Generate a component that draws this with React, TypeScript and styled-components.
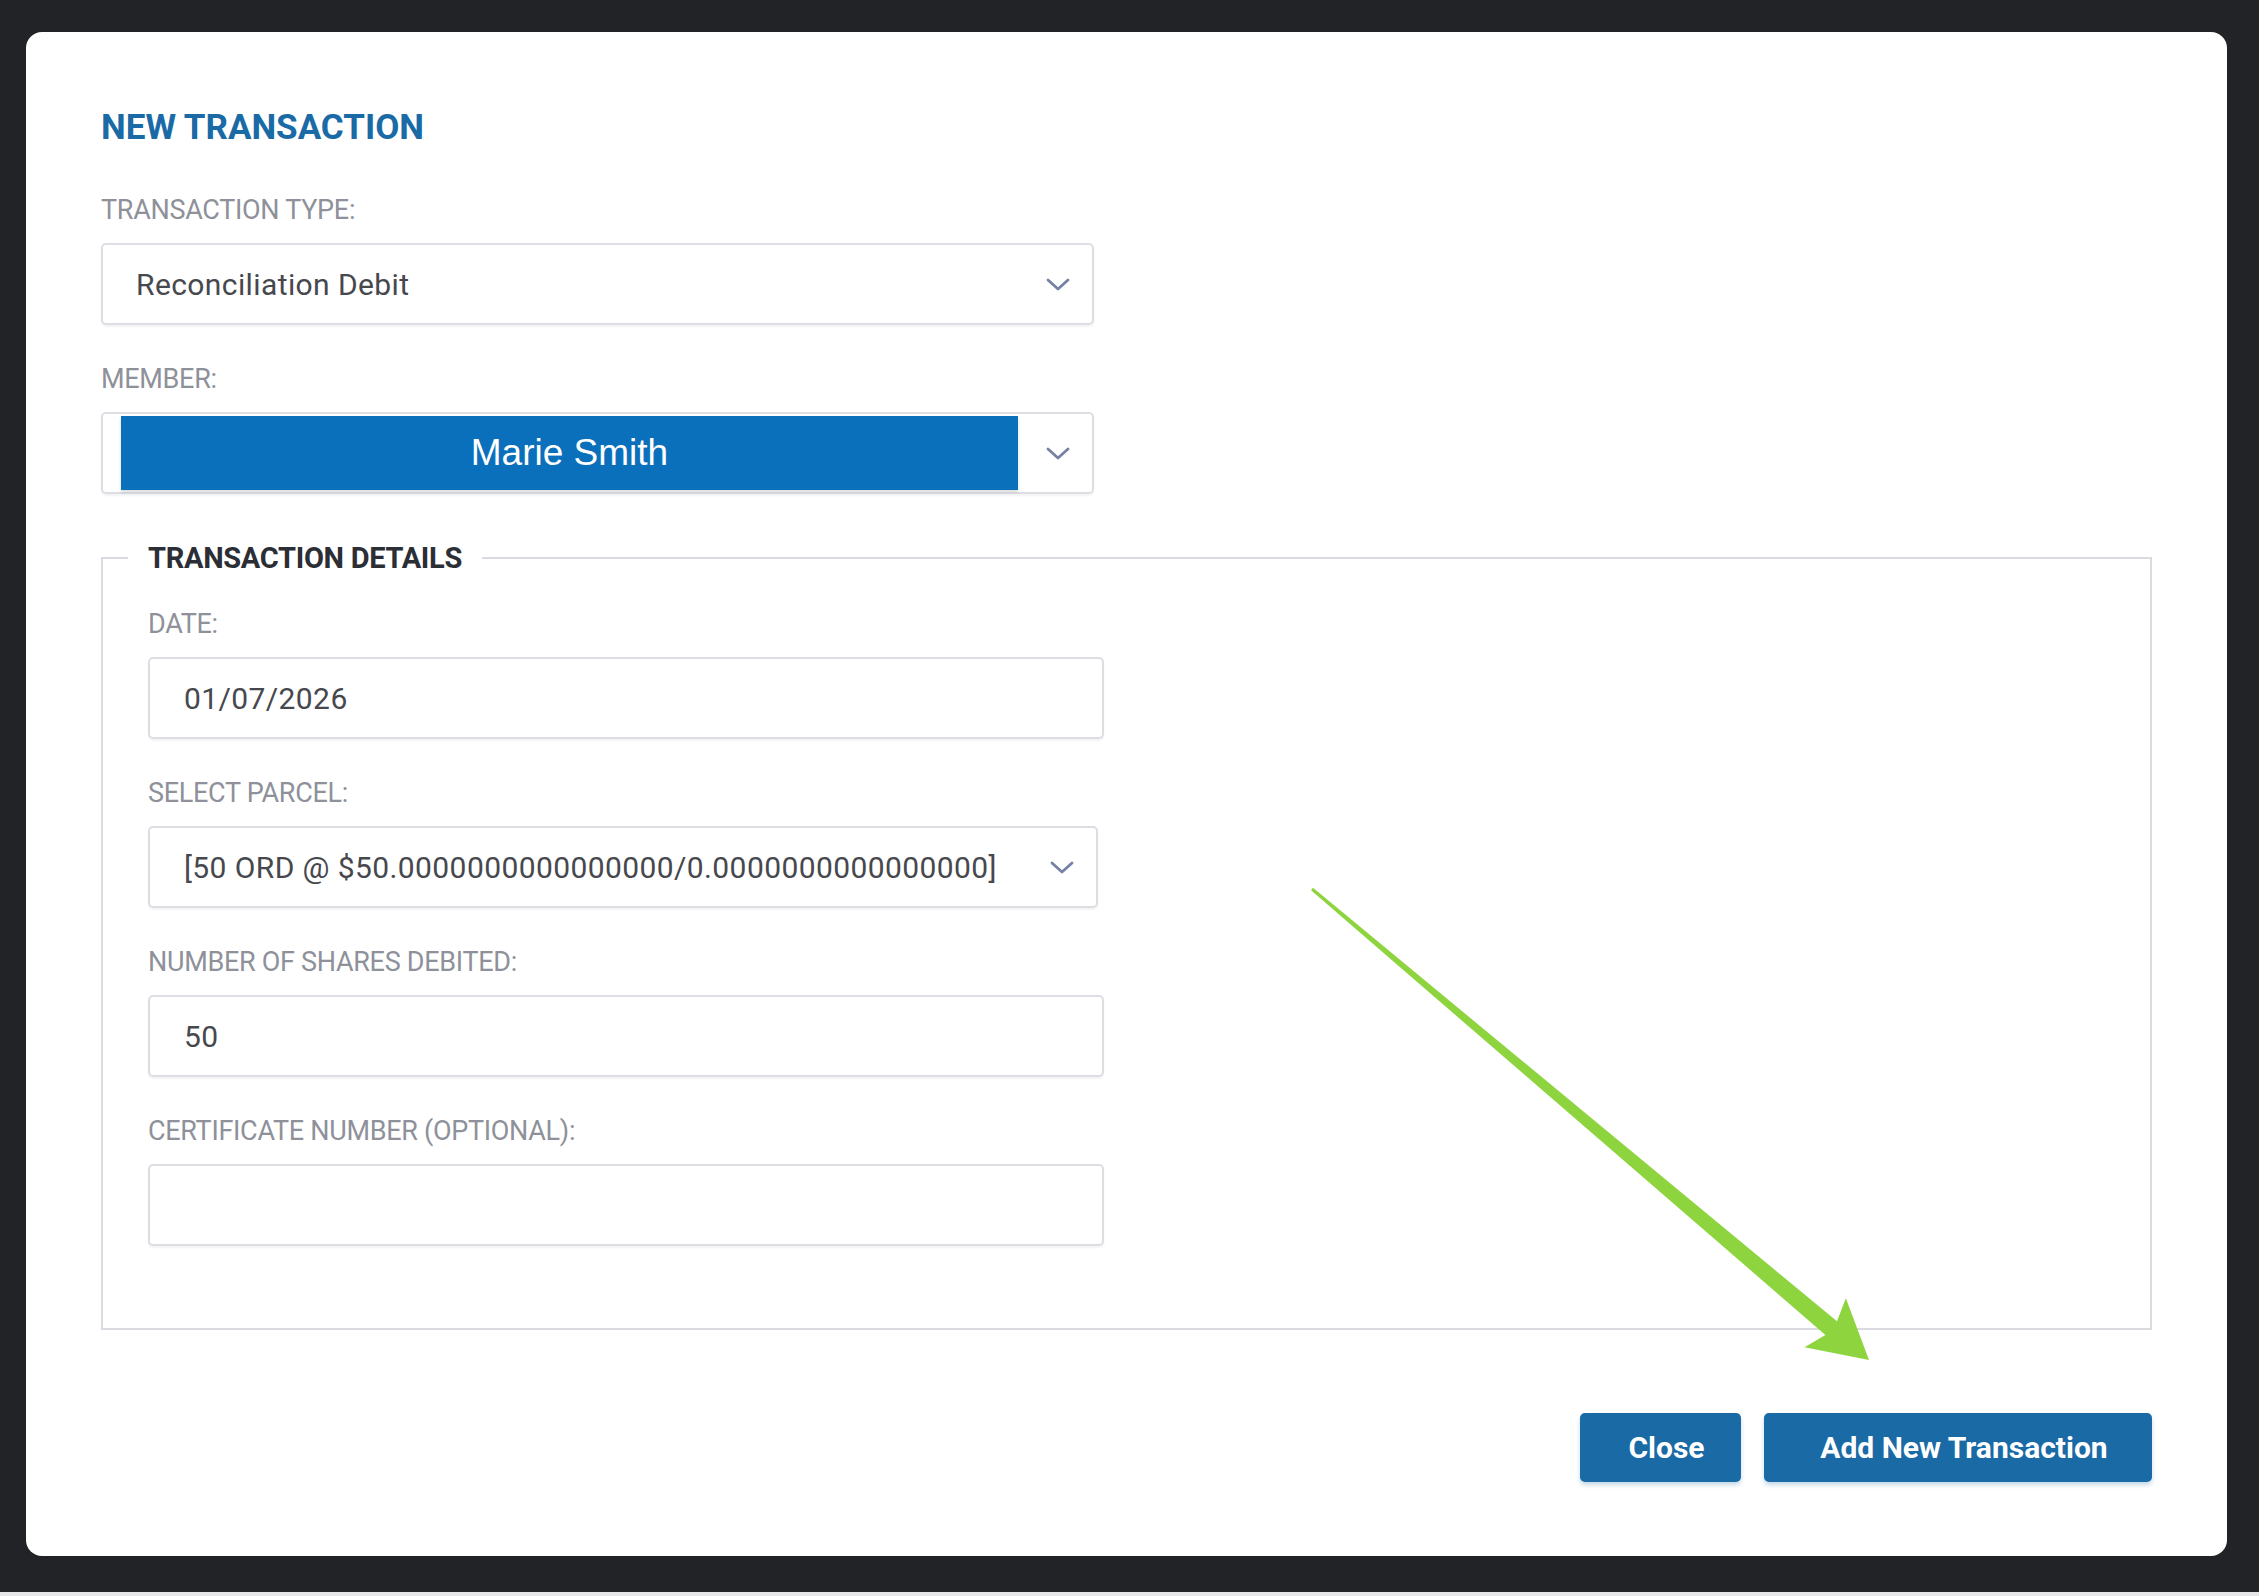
import styled, { createGlobalStyle } from "styled-components";

const COLORS = {
  backdrop: "#222326",
  brand: "#1a6aa6",
  highlight: "#0b70bb",
  label: "#8e9199",
  text: "#46484e",
  border: "#dcdee3",
  chevron: "#7582a3",
  arrow: "#8ed43f",
};

const GlobalStyle = createGlobalStyle`
  html, body {
    margin: 0;
    padding: 0;
    background: ${COLORS.backdrop};
  }
  body {
    font-family: Roboto, "Noto Sans", sans-serif;
  }
`;

const Backdrop = styled.div`
  height: 1592px;
  box-sizing: border-box;
  padding: 32px 32px 0 26px;
  background: ${COLORS.backdrop};
`;

const BottomEdge = styled.div`
  height: 4px;
  background: #e6e6e8;
`;

const Modal = styled.div`
  position: relative;
  height: 1524px;
  box-sizing: border-box;
  padding: 75px 75px 74px;
  background: #fff;
  border-radius: 16px;
  display: flex;
  flex-direction: column;
`;

const Title = styled.h2`
  margin: 0 0 45px;
  font-size: 35px;
  line-height: 42px;
  font-weight: 700;
  letter-spacing: 0;
  color: ${COLORS.brand};
  text-transform: uppercase;
`;

const Stack = styled.div<{ $gap: number }>`
  display: flex;
  flex-direction: column;
  gap: ${(p) => p.$gap}px;
`;

const Field = styled.div`
  display: flex;
  flex-direction: column;
`;

const Label = styled.label`
  font-size: 27px;
  line-height: 32px;
  letter-spacing: -0.3px;
  color: ${COLORS.label};
  text-transform: uppercase;
  margin-bottom: 17px;
`;

const Box = styled.div<{ $width: number; $padLeft?: number }>`
  width: ${(p) => p.$width}px;
  height: 82px;
  box-sizing: border-box;
  display: flex;
  align-items: center;
  padding: 0 22px 0 ${(p) => p.$padLeft ?? 33}px;
  border: 2px solid ${COLORS.border};
  border-radius: 5px;
  box-shadow: 0 2px 2px rgba(0, 0, 0, 0.05);
  font-size: 30px;
  letter-spacing: 0.4px;
  color: ${COLORS.text};
  white-space: nowrap;
`;

const Value = styled.span`
  flex: 1;
`;

const Highlight = styled.div`
  width: 897px;
  height: 74px;
  display: flex;
  align-items: center;
  justify-content: center;
  background: ${COLORS.highlight};
  color: #fff;
  font-family: "Liberation Sans", Arial, sans-serif;
  font-size: 37px;
  letter-spacing: 0;
  box-shadow: 0 2px 3px rgba(0, 0, 0, 0.15);
`;

const Fieldset = styled.fieldset`
  margin: 47px 0 0;
  padding: 0;
  min-width: 0;
  border: 2px solid #d9dbe0;
`;

const Legend = styled.legend`
  margin-left: 25px;
  padding: 0 20px;
  font-size: 29px;
  line-height: 34px;
  font-weight: 700;
  letter-spacing: -0.3px;
  color: #2c2e35;
  text-transform: uppercase;
`;

const FieldsetBody = styled.div`
  padding: 33px 0 82px 45px;
`;

const Footer = styled.div`
  margin-top: auto;
  display: flex;
  justify-content: flex-end;
  gap: 23px;
`;

const Button = styled.button<{ $width: number }>`
  width: ${(p) => p.$width}px;
  height: 69px;
  padding: 0 0 0 12px;
  border: none;
  border-radius: 5px;
  background: ${COLORS.brand};
  color: #fff;
  font-family: Roboto, sans-serif;
  font-size: 30px;
  font-weight: 700;
  letter-spacing: 0;
  box-shadow: 0 3px 4px rgba(26, 106, 166, 0.25);
  cursor: pointer;
`;

const Overlay = styled.svg`
  position: absolute;
  inset: 0;
  width: 100%;
  height: 100%;
  pointer-events: none;
`;

const Chevron = () => (
  <svg width="24" height="13" viewBox="0 0 24 13" style={{ flexShrink: 0 }}>
    <polyline
      points="2,2 12,11 22,2"
      fill="none"
      stroke={COLORS.chevron}
      strokeWidth="2.8"
      strokeLinecap="round"
      strokeLinejoin="round"
    />
  </svg>
);

const zeros = "0".repeat(16);
const parcel = `[50 ORD @ $50.${zeros}/0.${zeros}]`;

export default function App() {
  return (
    <>
      <GlobalStyle />
      <Backdrop>
        <Modal>
          <Title>New Transaction</Title>
          <Stack $gap={38}>
            <Field>
              <Label>Transaction Type:</Label>
              <Box $width={993}>
                <Value>Reconciliation Debit</Value>
                <Chevron />
              </Box>
            </Field>
            <Field>
              <Label>Member:</Label>
              <Box $width={993} $padLeft={18}>
                <Highlight>Marie Smith</Highlight>
                <Value />
                <Chevron />
              </Box>
            </Field>
          </Stack>

          <Fieldset>
            <Legend>Transaction Details</Legend>
            <FieldsetBody>
              <Stack $gap={38}>
                <Field>
                  <Label>Date:</Label>
                  <Box $width={956} $padLeft={34}>
                    <Value>01/07/2026</Value>
                  </Box>
                </Field>
                <Field>
                  <Label>Select Parcel:</Label>
                  <Box $width={950} $padLeft={34}>
                    <Value>{parcel}</Value>
                    <Chevron />
                  </Box>
                </Field>
                <Field>
                  <Label>Number of Shares Debited:</Label>
                  <Box $width={956} $padLeft={34}>
                    <Value>50</Value>
                  </Box>
                </Field>
                <Field>
                  <Label>Certificate Number (Optional):</Label>
                  <Box $width={956} $padLeft={34}>
                    <Value />
                  </Box>
                </Field>
              </Stack>
            </FieldsetBody>
          </Fieldset>

          <Footer>
            <Button $width={161}>Close</Button>
            <Button $width={388}>Add New Transaction</Button>
          </Footer>

          {/* pointer annotation towards the submit button */}
          <Overlay viewBox="0 0 2201 1524" preserveAspectRatio="none">
            <polygon
              points="1285,858.2 1799.4,1302.9 1778.5,1315.3 1843,1328 1819.9,1266.3 1811,1289.3 1287,855.8"
              fill={COLORS.arrow}
            />
          </Overlay>
        </Modal>
      </Backdrop>
      <BottomEdge />
    </>
  );
}
